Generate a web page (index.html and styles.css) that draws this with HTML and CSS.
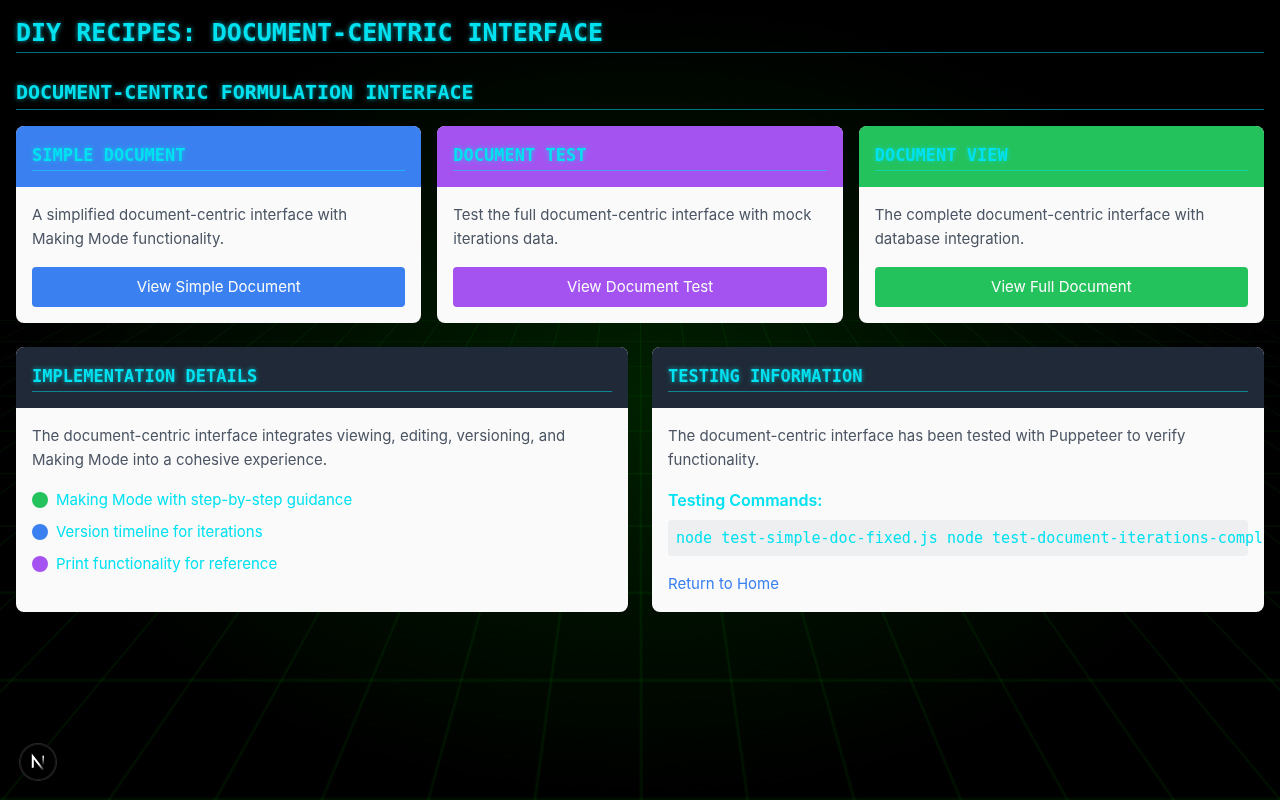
FILE: index.html
```html
<!DOCTYPE html>
<html lang="en">
<head>
  <meta charset="utf-8">
  <meta name="viewport" content="width=device-width, initial-scale=1">
  <title>DIY Recipes: Document-Centric Interface</title>
  <link rel="stylesheet" href="styles.css">
</head>
<body>
  <div class="backdrop" aria-hidden="true"><div class="backdrop-grid"></div></div>

  <main class="page">
    <h1 class="heading heading-page">DIY Recipes: Document-Centric Interface</h1>
    <h2 class="heading heading-section">Document-Centric Formulation Interface</h2>

    <section class="demos">
      <article class="card">
        <header class="card-header blue"><h3 class="heading heading-card">Simple Document</h3></header>
        <div class="card-body">
          <p class="text">A simplified document-centric interface with<br>Making Mode functionality.</p>
          <a class="action blue" href="#simple">View Simple Document</a>
        </div>
      </article>
      <article class="card">
        <header class="card-header purple"><h3 class="heading heading-card">Document Test</h3></header>
        <div class="card-body">
          <p class="text">Test the full document-centric interface with mock iterations data.</p>
          <a class="action purple" href="#test">View Document Test</a>
        </div>
      </article>
      <article class="card">
        <header class="card-header green"><h3 class="heading heading-card">Document View</h3></header>
        <div class="card-body">
          <p class="text">The complete document-centric interface with<br>database integration.</p>
          <a class="action green" href="#view">View Full Document</a>
        </div>
      </article>
    </section>

    <section class="details">
      <article class="card">
        <header class="card-header slate"><h3 class="heading heading-card">Implementation Details</h3></header>
        <div class="card-body">
          <p class="text">The document-centric interface integrates viewing, editing, versioning, and<br>Making Mode into a cohesive experience.</p>
          <ul class="features">
            <li class="feature"><span class="dot green"></span>Making Mode with step-by-step guidance</li>
            <li class="feature"><span class="dot blue"></span>Version timeline for iterations</li>
            <li class="feature"><span class="dot purple"></span>Print functionality for reference</li>
          </ul>
        </div>
      </article>
      <article class="card">
        <header class="card-header slate"><h3 class="heading heading-card">Testing Information</h3></header>
        <div class="card-body">
          <p class="text">The document-centric interface has been tested with Puppeteer to verify<br>functionality.</p>
          <h4 class="subheading">Testing Commands:</h4>
          <pre class="commands"><code>node test-simple-doc-fixed.js node test-document-iterations-complete.js</code></pre>
          <a class="home-link" href="#home">Return to Home</a>
        </div>
      </article>
    </section>
  </main>

  <button class="dev-badge" type="button" aria-label="Open developer tools">
    <svg width="36" height="36" viewBox="0 0 40 40" fill="none" aria-hidden="true">
      <defs>
        <linearGradient id="stem" x1="26" y1="13" x2="26" y2="24" gradientUnits="userSpaceOnUse">
          <stop stop-color="#fff"/><stop offset="1" stop-color="#fff" stop-opacity="0"/>
        </linearGradient>
        <linearGradient id="diagonal" x1="22" y1="21" x2="27" y2="28" gradientUnits="userSpaceOnUse">
          <stop stop-color="#fff"/><stop offset="1" stop-color="#fff" stop-opacity="0.1"/>
        </linearGradient>
      </defs>
      <path d="M14.2 26.5V13.8l11.6 15" stroke="url(#diagonal)" stroke-width="2.2"/>
      <path d="M25.8 13v11" stroke="url(#stem)" stroke-width="1.8"/>
    </svg>
  </button>
</body>
</html>
```
FILE: styles.css
```css
:root {
  --cyan: #00e1f0;
  --blue: #3a80f0;
  --purple: #a453f1;
  --green: #24c25c;
  --slate: #1f2937;
  --surface: #fafafa;
}

*, *::before, *::after { box-sizing: border-box; }

body {
  margin: 0;
  min-height: 100vh;
  background: #000;
  color: var(--cyan);
  font-family: Inter, "Liberation Sans", sans-serif;
  font-size: 15px;
  line-height: 24px;
}

h1, h2, h3, h4, p, ul, pre { margin: 0; }

.backdrop {
  position: fixed;
  inset: 0;
  z-index: -1;
  overflow: hidden;
  background: radial-gradient(ellipse at center, #002000 0%, #000 70%);
}

.backdrop-grid {
  position: absolute;
  left: -50%;
  bottom: 0;
  width: 200%;
  height: 60%;
  background-image:
    linear-gradient(rgba(0, 255, 0, 0.07) 1px, transparent 1px),
    linear-gradient(90deg, rgba(0, 255, 0, 0.07) 1px, transparent 1px);
  background-size: 40px 40px;
  transform: perspective(500px) rotateX(60deg);
  transform-origin: center top;
}

.page { padding: 16px; }

.heading {
  border-bottom: 1px solid rgba(0, 225, 240, 0.5);
  padding: 2px 0 4px;
  font-family: "DejaVu Sans Mono", "Liberation Mono", monospace;
  font-weight: 700;
  text-transform: uppercase;
  text-shadow: 0 0 5px rgba(0, 225, 240, 0.7);
}

.heading-page { margin-bottom: 24px; font-size: 25px; line-height: 30px; }
.heading-section { margin-bottom: 16px; font-size: 20px; line-height: 26px; }
.heading-card { font-size: 17px; line-height: 22px; }

.demos {
  display: grid;
  grid-template-columns: repeat(3, minmax(0, 1fr));
  gap: 16px;
  margin-bottom: 24px;
}

.details {
  display: grid;
  grid-template-columns: repeat(2, minmax(0, 1fr));
  gap: 24px;
}

.card {
  overflow: hidden;
  border-radius: 8px;
  background: var(--surface);
}

.card-header, .card-body { padding: 16px; }

.blue { background: var(--blue); }
.purple { background: var(--purple); }
.green { background: var(--green); }
.slate { background: var(--slate); }

.text { margin-bottom: 16px; color: #4b5563; }

.action {
  display: block;
  padding: 8px 16px;
  border-radius: 4px;
  color: var(--surface);
  text-align: center;
  text-decoration: none;
}

.features {
  display: flex;
  flex-direction: column;
  gap: 8px;
  padding: 0;
  list-style: none;
}

.feature { display: flex; align-items: center; gap: 8px; }

.dot { width: 16px; height: 16px; border-radius: 50%; }

.subheading { margin-bottom: 8px; font-size: 16px; font-weight: 600; }

.commands {
  margin-bottom: 16px;
  padding: 8px;
  border-radius: 4px;
  background: #edeff0;
  font-size: 15px;
  line-height: 20px;
}

.commands code { font-family: "DejaVu Sans Mono", "Liberation Mono", monospace; }

.home-link { color: var(--blue); text-decoration: none; }

.dev-badge {
  position: fixed;
  left: 20px;
  bottom: 20px;
  display: grid;
  place-items: center;
  width: 36px;
  height: 36px;
  padding: 0;
  border: 0;
  border-radius: 50%;
  background: #000;
  box-shadow: 0 0 0 1px #292929, inset 0 0 0 1px #1c1c1c;
}

@media (max-width: 760px) {
  .demos, .details { grid-template-columns: minmax(0, 1fr); }
}
```
